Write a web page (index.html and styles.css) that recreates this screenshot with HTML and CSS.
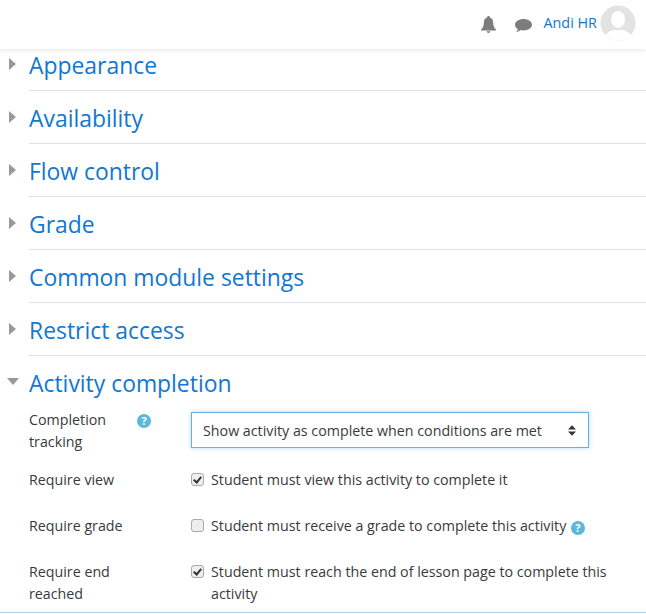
FILE: index.html
```html
<!DOCTYPE html>
<html>
<head>
  <meta charset="UTF-8">
  <title>Activity completion settings</title>
  <link rel="stylesheet" href="styles.css">
</head>
<body>
  <header class="navbar">
    <svg class="nav-icon bell" viewBox="0 0 16 18"><path d="M8 0c-1 0-1.500.7-1.500 1.500C4 2.200 3 4.300 3 7c0 3.500-1 5.500-3 7.500v1h16v-1c-2-2-3-4-3-7.500 0-2.700-1-4.800-3.500-5.500C9.500.7 9 0 8 0zM6 16.200c.2 1 1 1.800 2 1.800s1.800-.8 2-1.800z"/></svg>
    <svg class="nav-icon chat" viewBox="0 0 17 15"><path d="M8.500 1C3.800 1 0 3.500 0 6.800c0 1.800 1.100 3.300 2.800 4.400-.2 1-.8 1.900-1.600 2.800 1.700-.2 3.300-.9 4.600-1.900.9.200 1.800.3 2.700.3 4.700 0 8.500-2.500 8.500-5.600S13.200 1 8.500 1z"/></svg>
    <a class="user-name">Andi HR</a>
    <svg class="avatar" viewBox="0 0 36 36">
      <defs><clipPath id="avatar-clip"><circle cx="18" cy="18" r="17.500"/></clipPath></defs>
      <circle cx="18" cy="18" r="17.500" fill="#e3e3e3"/>
      <g clip-path="url(#avatar-clip)" fill="#fff">
        <ellipse cx="18" cy="14.500" rx="7" ry="8.500"/>
        <path d="M3 36c1-7 5-9 10-11h10c5 2 9 4 10 11z"/>
      </g>
    </svg>
  </header>

  <main class="form">
    <section class="section">
      <span class="arrow"></span>
      <h3>Appearance</h3>
    </section>
    <section class="section">
      <span class="arrow"></span>
      <h3>Availability</h3>
    </section>
    <section class="section">
      <span class="arrow"></span>
      <h3>Flow control</h3>
    </section>
    <section class="section">
      <span class="arrow"></span>
      <h3>Grade</h3>
    </section>
    <section class="section">
      <span class="arrow"></span>
      <h3>Common module settings</h3>
    </section>
    <section class="section">
      <span class="arrow"></span>
      <h3>Restrict access</h3>
    </section>
    <section class="section open">
      <span class="arrow"></span>
      <h3>Activity completion</h3>
    </section>

    <div class="rows">
      <div class="row row-select">
        <div class="label">
          <span>Completion tracking</span>
          <span class="help help-label">?</span>
        </div>
        <div class="select">
          <span>Show activity as complete when conditions are met</span>
          <svg class="select-arrows" viewBox="0 0 9 12"><path d="M4.500 0L9 5H0zM0 7h9l-4.500 5z"/></svg>
        </div>
      </div>
      <div class="row row-view">
        <div class="label">Require view</div>
        <div class="check-line">
          <span class="check on"></span>
          <span>Student must view this activity to complete it</span>
        </div>
      </div>
      <div class="row row-grade">
        <div class="label">Require grade</div>
        <div class="check-line">
          <span class="check"></span>
          <span>Student must receive a grade to complete this activity <span class="help">?</span></span>
        </div>
      </div>
      <div class="row row-end">
        <div class="label">Require end reached</div>
        <div class="check-line">
          <span class="check on"></span>
          <span>Student must reach the end of lesson page to complete this activity</span>
        </div>
      </div>
    </div>
  </main>
  <div class="page-end"></div>
</body>
</html>
```

FILE: styles.css
```css
html, body {
  height: 100%;
}
body {
  margin: 0;
  width: 646px;
  height: 614px;
  overflow: hidden;
  background-color: #fff;
  color: #373a3c;
  font-family: "Open Sans", "Noto Sans", sans-serif;
  font-size: 14.25px;
}
.navbar {
  height: 49px;
  display: flex;
  align-items: center;
  justify-content: flex-end;
  padding-right: 10px;
  box-shadow: 0 2px 4px rgba(0, 0, 0, 0.08);
}
.nav-icon {
  fill: #7d7d7d;
}
.bell {
  width: 15px;
  height: 17px;
  margin-right: 19px;
  margin-bottom: 1px;
}
.chat {
  width: 17px;
  height: 15px;
  margin-right: 11px;
  margin-top: 1px;
}
.user-name {
  color: #1177d1;
  font-size: 14.4px;
  margin-bottom: 4px;
}
.avatar {
  width: 36px;
  height: 36px;
  margin-left: 3px;
  margin-bottom: 4px;
}
.form {
  padding-left: 29px;
}
.section {
  height: 52px;
  border-bottom: 1px solid #dee2e6;
  display: flex;
  align-items: flex-start;
  position: relative;
}
.section:first-child {
  height: 41px;
}
.section h3 {
  margin: 0;
  color: #1177d1;
  font-size: 22.9px;
  font-weight: 400;
  line-height: 34px;
  padding-top: 11px;
}
.section:first-child h3 {
  padding-top: 0;
}
.arrow {
  position: absolute;
  left: -20px;
  top: 20px;
  width: 0;
  height: 0;
  border-left: 7px solid #999;
  border-top: 6px solid transparent;
  border-bottom: 6px solid transparent;
}
.section:first-child .arrow {
  top: 9px;
}
.section.open {
  border-bottom: 0;
  height: 50px;
}
.section.open .arrow {
  left: -22px;
  top: 22px;
  border-left: 6px solid transparent;
  border-right: 6px solid transparent;
  border-top: 7px solid #999;
  border-bottom: 0;
}
.row {
  display: flex;
  align-items: flex-start;
  line-height: 22px;
  padding-right: 30px;
}
.label {
  width: 162px;
  flex: none;
  display: flex;
  box-sizing: border-box;
  padding-right: 50px;
}
.row-select .label {
  padding-right: 0;
  padding-top: 3px;
}
.row-select .label > span:first-child {
  width: 106px;
}
.row-view {
  margin-top: 16px;
}
.row-grade {
  margin-top: 24px;
}
.row-end {
  margin-top: 24px;
}
.select {
  box-sizing: border-box;
  width: 398px;
  height: 36px;
  margin-top: 6px;
  border: 1px solid #66afe9;
  box-shadow: 0 0 4px rgba(102, 175, 233, 0.5);
  display: flex;
  align-items: center;
  justify-content: space-between;
  padding: 1px 12px 0 11px;
}
.select-arrows {
  width: 8px;
  height: 11px;
  fill: #333;
}
.check-line {
  display: flex;
  align-items: flex-start;
  flex: 1;
}
.check {
  box-sizing: border-box;
  width: 13px;
  height: 13px;
  margin: 4px 7px 0 0;
  flex: none;
  border: 1px solid #aaa;
  border-radius: 3px;
  background-color: #eee;
  position: relative;
}
.check.on::after {
  content: "";
  position: absolute;
  left: 3px;
  top: 1px;
  width: 3px;
  height: 6px;
  border: solid #333;
  border-width: 0 2px 2px 0;
  transform: rotate(40deg);
}
.help {
  display: inline-block;
  width: 14px;
  height: 14px;
  border-radius: 50%;
  background-color: #5bb8dc;
  color: #fff;
  font-size: 11px;
  font-weight: 700;
  line-height: 14px;
  text-align: center;
  vertical-align: -1px;
  margin-left: 1px;
}
.help-label {
  margin-top: 5px;
  margin-left: 2px;
  flex: none;
}
.page-end {
  height: 1px;
  margin-top: 7px;
  background-color: #b5cfe6;
}
```
